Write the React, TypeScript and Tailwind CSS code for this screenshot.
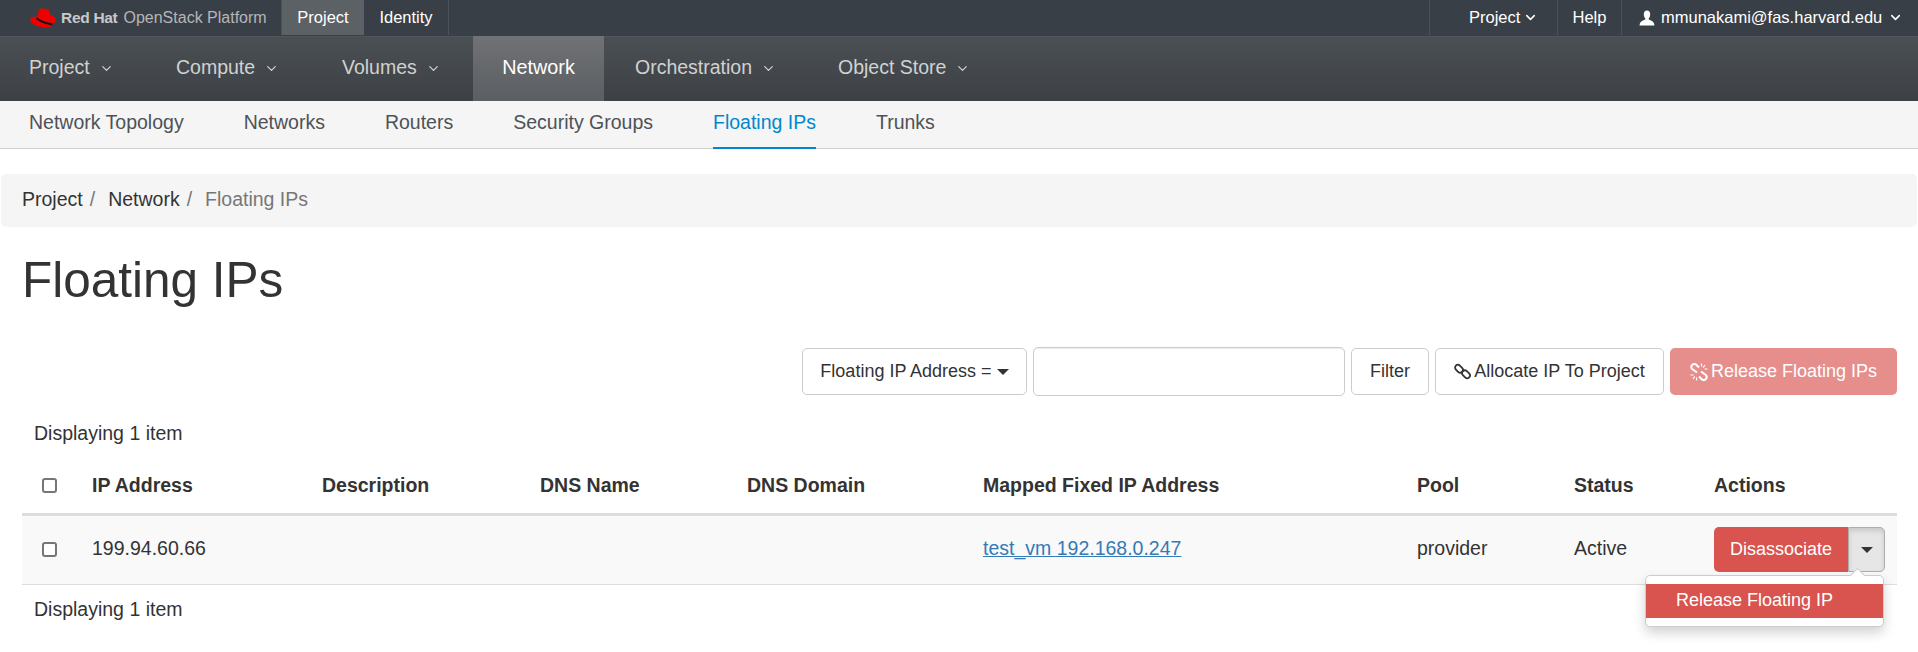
import React from 'react';
import { ChevronDown } from 'lucide-react';

const FONT = 'font-["Liberation_Sans",Arial,sans-serif]';

function Caret({ className = '' }: { className?: string }) {
  return (
    <span
      className={`inline-block w-0 h-0 border-x-[6px] border-x-transparent border-t-[6px] border-t-[#333] ${className}`}
    />
  );
}

function RedHatLogo() {
  return (
    <svg width="28" height="24" viewBox="0 0 28 24" aria-hidden="true">
      <path d="M8 12 L9.5 5.5 C10 3 11.5 1.5 14 2.4 C16 3 17.4 2.6 18.5 3 C20 3.6 20.6 6 21 8.5 C24 10 27 11.5 27 14.5 C27 17 24.5 17.5 21.5 16.8 C16 15.5 11 14 8 12 Z" fill="#e00" />
      <path d="M7.8 10.6 C5 10.8 1.2 11.3 1.2 14 C1.2 17.5 8 21 16 21.5 C21 21.8 23.5 20.5 23.5 18 C18 17.5 10 14.5 7.8 10.6 Z" fill="#e00" />
      <path d="M7.8 11.4 C11 14 16 16.2 23 17.6 L23.4 19.4 C16 18.4 9.5 15.6 7 12.6 Z" fill="#111" />
    </svg>
  );
}

function UserGlyph() {
  return (
    <svg width="16" height="16" viewBox="0 0 16 16" fill="white" aria-hidden="true">
      <path d="M8 0.5 C5.9 0.5 4.8 2 4.8 4.2 C4.8 6 5.5 7.6 6.3 8.4 L6.3 9.6 C4.2 10.6 0.6 11.4 0.6 15.5 L15.4 15.5 C15.4 11.4 11.8 10.6 9.7 9.6 L9.7 8.4 C10.5 7.6 11.2 6 11.2 4.2 C11.2 2 10.1 0.5 8 0.5 Z" />
    </svg>
  );
}

function LinkIcon({ className = '' }: { className?: string }) {
  return (
    <svg width="17" height="17" viewBox="0 0 17 17" fill="none" stroke="currentColor" strokeWidth="1.8" className={className} aria-hidden="true">
      <rect x="0.6" y="2.9" width="8.8" height="5.6" rx="2.8" transform="rotate(45 5 5.7)" />
      <rect x="7.6" y="8.5" width="8.8" height="5.6" rx="2.8" transform="rotate(45 12 11.3)" />
    </svg>
  );
}

function UnlinkIcon({ className = '' }: { className?: string }) {
  return (
    <svg width="18" height="18" viewBox="0 0 18 18" fill="none" stroke="currentColor" strokeWidth="2" className={className} aria-hidden="true">
      <path d="M9 4.5 L6.5 2 A2.8 2.8 0 0 0 2.2 6 L7 9.5" />
      <path d="M9 13.5 L11.5 16 A2.8 2.8 0 0 0 15.8 12 L11 8.5" />
      <path d="M11.5 0.5 V3.5 M15 2 L13.2 4.6 M17.5 6 H14.5 M0.5 12 H3.5 M3 16 L4.8 13.4 M6.5 17.5 V14.5" strokeWidth="1.2" />
    </svg>
  );
}

function Checkbox() {
  return <span className="block w-[15px] h-[15px] rounded-[3px] border-2 border-[#767676] bg-white" />;
}

const mainNav = [
  { label: 'Project', w: 'w-[147px]', pad: 'pl-[29px]', caret: true },
  { label: 'Compute', w: 'w-[166px]', pad: 'pl-[29px]', caret: true },
  { label: 'Volumes', w: 'w-[160px]', pad: 'pl-[29px]', caret: true },
  { label: 'Network', w: 'w-[131px]', pad: '', active: true },
  { label: 'Orchestration', w: 'w-[203px]', pad: 'pl-[31px]', caret: true },
  { label: 'Object Store', w: 'w-[190px]', pad: 'pl-[31px]', caret: true },
];

const subNav = ['Network Topology', 'Networks', 'Routers', 'Security Groups', 'Floating IPs', 'Trunks'];

export default function App() {
  return (
    <div className={`${FONT} w-[1918px] h-[652px] overflow-hidden bg-white text-[19.5px] text-[#333]`}>
      {/* Masthead */}
      <div className="h-[36px] flex items-stretch bg-[#393f47] text-white text-[16.5px]">
        <div className="w-[282px] pl-[29px] flex items-center gap-[4px] border-r border-[#4d5258] mb-[1px]">
          <RedHatLogo />
          <span className="text-[15.5px] font-bold text-[#c8c9cb] tracking-[-0.3px] whitespace-nowrap">Red Hat</span>
          <span className="ml-[2px] text-[16px] text-[#b4b6b9] whitespace-nowrap">OpenStack Platform</span>
        </div>
        <div className="w-[82px] flex items-center justify-center bg-[#5c6165] mb-[1px]">Project</div>
        <div className="w-[85px] flex items-center justify-center border-r border-[#4d5258] mb-[1px]">Identity</div>
        <div className="ml-auto flex items-stretch">
          <div className="w-[128px] pl-[39px] flex items-center gap-[3px] border-l border-[#4d5258] mb-[1px]">
            Project <ChevronDown size={15} strokeWidth={2.5} />
          </div>
          <div className="w-[64px] flex items-center justify-center border-l border-[#4d5258] mb-[1px]">Help</div>
          <div className="w-[297px] flex items-center pl-[17px] gap-[6px] border-l border-[#4d5258] mb-[1px] whitespace-nowrap">
            <UserGlyph />
            mmunakami@fas.harvard.edu <ChevronDown size={15} strokeWidth={2.5} />
          </div>
        </div>
      </div>

      {/* Main nav */}
      <div className="h-[65px] flex items-stretch border-t border-[#4f555a] bg-gradient-to-b from-[#4a4f53] to-[#3d4145] text-[19.5px] text-[#d1d1d1]">
        {mainNav.map((item) => (
          <div
            key={item.label}
            className={
              item.active
                ? `${item.w} -mt-[1px] pb-[2px] flex items-center justify-center bg-gradient-to-b from-[#707275] to-[#5b5e62] text-[19.8px] text-white`
                : `${item.w} ${item.pad} pb-[2px] flex items-center gap-[9px]`
            }
          >
            {item.label}
            {item.caret && <ChevronDown size={15} strokeWidth={2} />}
          </div>
        ))}
      </div>

      {/* Sub nav */}
      <div className="h-[48px] pl-[29px] flex items-stretch gap-[60px] bg-[#f5f5f5] border-b border-[#d1d1d1] text-[19.5px] text-[#4d5258]">
        {subNav.map((label) =>
          label === 'Floating IPs' ? (
            <div key={label} className="flex items-center pb-[3px] border-b-2 border-[#0088ce] text-[#0088ce] h-[48px]">
              {label}
            </div>
          ) : (
            <div key={label} className="flex items-center pb-[3px]">
              {label}
            </div>
          )
        )}
      </div>

      <div className="px-[1px] pt-[25px]">
        {/* Breadcrumb */}
        <div className="h-[53px] pl-[21px] pb-[2px] flex items-center rounded-[5px] bg-[#f5f5f5] text-[19.5px]">
          <span className="text-[#333]">Project</span>
          <span className="text-[#777] ml-[7px] mr-[13px]">/</span>
          <span className="text-[#333]">Network</span>
          <span className="text-[#777] ml-[7px] mr-[13px]">/</span>
          <span className="text-[#777]">Floating IPs</span>
        </div>

        {/* Page title */}
        <h1 className="ml-[21px] mt-[25px] text-[49.5px] leading-[56px] font-normal text-[#333]">Floating IPs</h1>

        {/* Filter actions */}
        <div className="mt-[39px] pr-[20px] flex justify-end items-center text-[18px]">
          <button className="h-[47px] w-[225px] flex items-center justify-center gap-[5px] rounded-[5px] border border-[#ccc] bg-white">
            Floating IP Address = <Caret />
          </button>
          <input className="ml-[6px] h-[49px] w-[312px] rounded-[5px] border border-[#ccc] bg-white shadow-[inset_0_1px_1px_rgba(0,0,0,0.075)]" />
          <button className="ml-[6px] h-[47px] w-[78px] rounded-[5px] border border-[#ccc] bg-white">Filter</button>
          <button className="ml-[6px] h-[47px] w-[229px] flex items-center justify-center gap-[3px] rounded-[5px] border border-[#ccc] bg-white">
            <LinkIcon /> Allocate IP To Project
          </button>
          <button className="ml-[6px] h-[47px] w-[227px] flex items-center justify-center gap-[3px] rounded-[5px] bg-[#e58e8c] text-white">
            <UnlinkIcon /> Release Floating IPs
          </button>
        </div>

        {/* Table */}
        <div className="relative mx-[21px] mt-[12px]">
          <div className="h-[50px] pl-[12px] pt-[1px] flex items-center">Displaying 1 item</div>
          <table className="w-[1875px] table-fixed border-collapse text-left text-[19.5px]">
            <thead>
              <tr className="h-[56px] border-b-[3px] border-[#ddd] font-bold">
                <th className="w-[70px] pl-[20px]"><Checkbox /></th>
                <th className="w-[230px]">IP Address</th>
                <th className="w-[218px]">Description</th>
                <th className="w-[207px]">DNS Name</th>
                <th className="w-[236px]">DNS Domain</th>
                <th className="w-[434px]">Mapped Fixed IP Address</th>
                <th className="w-[157px]">Pool</th>
                <th className="w-[140px]">Status</th>
                <th>Actions</th>
              </tr>
            </thead>
            <tbody>
              <tr className="h-[70px] bg-[#f9f9f9] border-b border-[#ddd]">
                <td className="pl-[20px]"><Checkbox /></td>
                <td className="pb-[2px]">199.94.60.66</td>
                <td />
                <td />
                <td />
                <td className="pb-[2px]"><span className="text-[#337ab7] underline">test_vm 192.168.0.247</span></td>
                <td className="pb-[2px]">provider</td>
                <td className="pb-[2px]">Active</td>
                <td>
                  <div className="flex items-center">
                    <span className="h-[45px] w-[134px] flex items-center justify-center rounded-l-[5px] bg-[#d9534f] text-white text-[18px]">Disassociate</span>
                    <span className="h-[45px] w-[37px] flex items-center justify-center rounded-r-[5px] border border-[#adadad] bg-[#e6e6e6] shadow-[inset_0_3px_5px_rgba(0,0,0,0.125)]">
                      <Caret />
                    </span>
                  </div>
                </td>
              </tr>
            </tbody>
          </table>
          <div className="h-[50px] pl-[12px] flex items-center">Displaying 1 item</div>

          {/* Open actions menu */}
          <div className="absolute right-[12px] top-[167px] w-[239px] h-[52px] py-[8px] rounded-[5px] border border-[#ccc] bg-white shadow-[0_6px_12px_rgba(0,0,0,0.175)]">
            <div className="absolute right-[20px] -top-[6px] w-[11px] h-[11px] rotate-45 border-l border-t border-[#ccc] bg-white" />
            <div className="relative h-[34px] pl-[30px] pb-[1px] flex items-center bg-[#d9534f] text-white text-[18px] whitespace-nowrap">
              Release Floating IP
            </div>
          </div>
        </div>
      </div>
    </div>
  );
}
